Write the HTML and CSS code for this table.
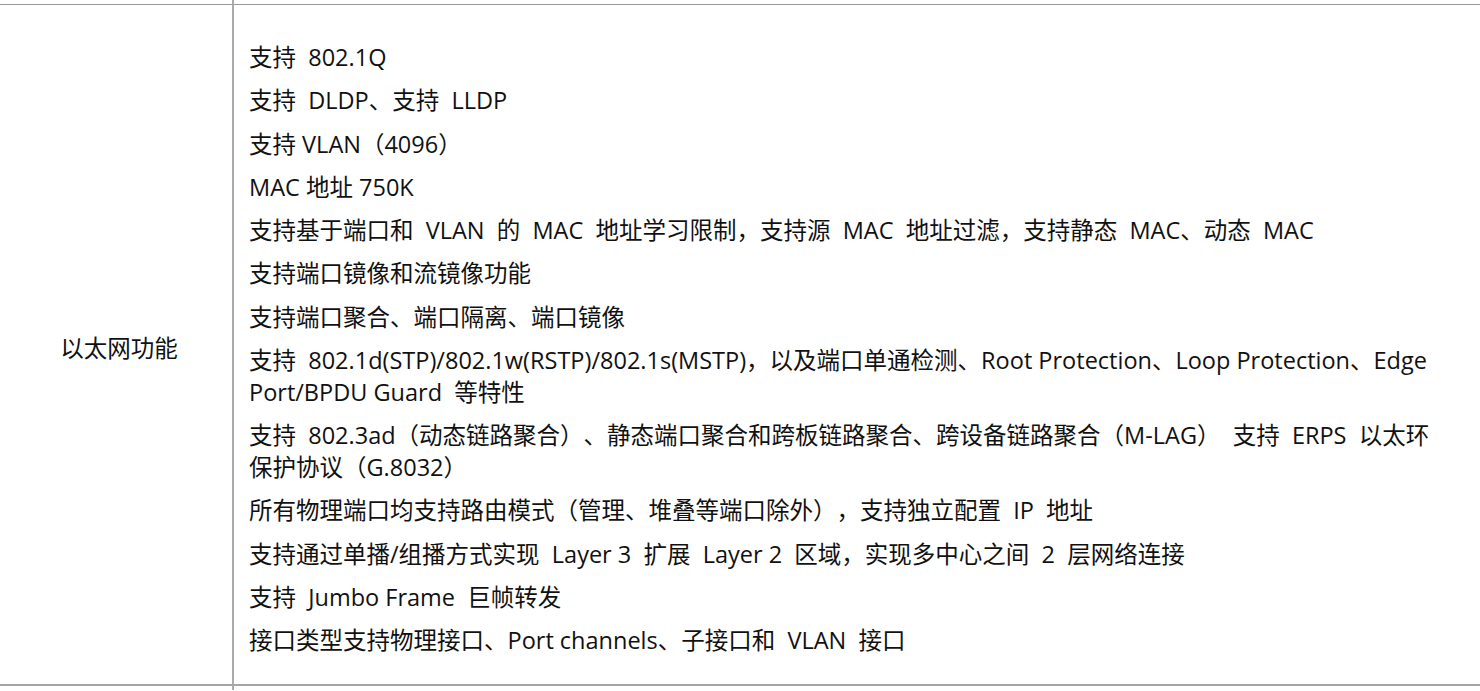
FILE: index.html
```html
<!DOCTYPE html>
<html lang="zh-CN">
<head>
<meta charset="utf-8">
<title>以太网功能</title>
<link rel="stylesheet" href="styles.css">
</head>
<body>
<table class="spec">
  <tr class="stub"><td class="label"></td><td class="content"></td></tr>
  <tr class="main">
    <td class="label">以太网功能</td>
    <td class="content">
      <p>支持&nbsp; 802.1Q</p>
      <p>支持&nbsp; DLDP、支持&nbsp; LLDP</p>
      <p>支持 VLAN（4096）</p>
      <p>MAC 地址 750K</p>
      <p>支持基于端口和&nbsp; VLAN&nbsp; 的&nbsp; MAC&nbsp; 地址学习限制，支持源&nbsp; MAC&nbsp; 地址过滤，支持静态&nbsp; MAC、动态&nbsp; MAC</p>
      <p>支持端口镜像和流镜像功能</p>
      <p>支持端口聚合、端口隔离、端口镜像</p>
      <p>支持&nbsp; 802.1d(STP)/802.1w(RSTP)/802.1s(MSTP)，以及端口单通检测、Root Protection、Loop Protection、Edge Port/BPDU Guard&nbsp; 等特性</p>
      <p>支持&nbsp; 802.3ad（动态链路聚合）、静态端口聚合和跨板链路聚合、跨设备链路聚合（M-LAG）&nbsp; 支持&nbsp; ERPS&nbsp; 以太环保护协议（G.8032）</p>
      <p>所有物理端口均支持路由模式（管理、堆叠等端口除外），支持独立配置&nbsp; IP&nbsp; 地址</p>
      <p>支持通过单播/组播方式实现&nbsp; Layer 3&nbsp; 扩展&nbsp; Layer 2&nbsp; 区域，实现多中心之间&nbsp; 2&nbsp; 层网络连接</p>
      <p>支持&nbsp; Jumbo Frame&nbsp; 巨帧转发</p>
      <p>接口类型支持物理接口、Port channels、子接口和&nbsp; VLAN&nbsp; 接口</p>
    </td>
  </tr>
  <tr class="stub"><td class="label"></td><td class="content"></td></tr>
</table>
</body>
</html>
```

FILE: styles.css
```css
html, body {
  margin: 0;
  background: #fff;
}

body {
  font-family: "Open Sans", "Noto Sans CJK SC", sans-serif;
  font-size: 23.5px;
  color: #111;
  overflow: hidden;
  text-spacing-trim: space-all;
}

.spec {
  border-collapse: separate;
  border-spacing: 0;
  width: 1480px;
}

.spec td {
  padding: 0;
}

.spec .label {
  width: 226px;
  padding-left: 6px;
  border-right: 2px solid #ababab;
  text-align: center;
  vertical-align: middle;
}

.stub td {
  height: 4px;
}

.main td {
  border-top: 1px solid #999;
  border-bottom: 2px solid #a5a5a5;
}

.main .label {
  padding-top: 4px;
}

.main .content {
  padding: 36px 35px 28px 15px;
  vertical-align: top;
}

.content p {
  margin: 0 0 11.25px;
  line-height: 32px;
}

.content p:last-child {
  margin-bottom: 0;
}
```
